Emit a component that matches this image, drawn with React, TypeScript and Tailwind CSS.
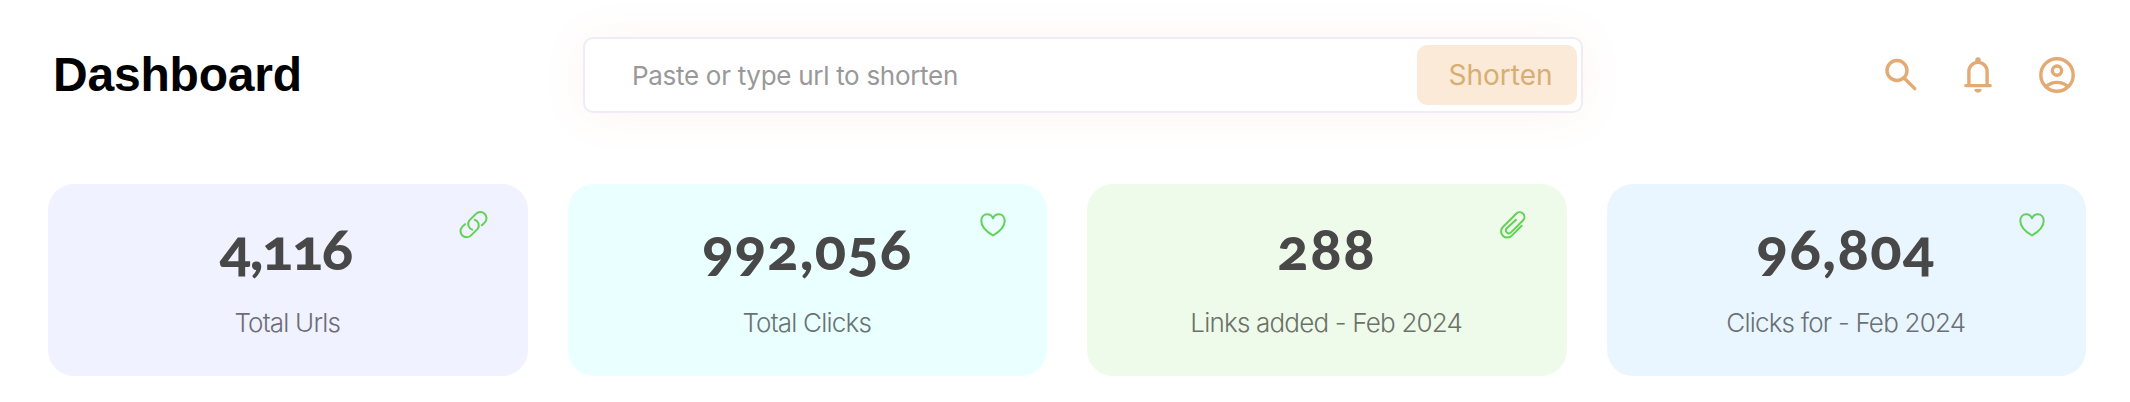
import type { ReactNode } from "react";

const LinkIcon = () => (
  <svg width="30" height="30" viewBox="0 0 30 30" fill="none" stroke="#63d156" strokeWidth="2" strokeLinecap="round">
    <path d="M13.3 19.6A5.9 5.9 0 0 1 10.4 10.4L16.9 3.9A6.1 6.1 0 0 1 25.8 12.4L22.9 15.2" />
    <path d="M15.7 9.7A5.9 5.9 0 0 1 18.6 18.9L12.1 25.4A6.1 6.1 0 0 1 3.2 16.9L6.1 14.1" />
  </svg>
);

const HeartIcon = () => (
  <svg width="30" height="30" viewBox="0 0 30 30" fill="none" stroke="#63d156" strokeWidth="2" strokeLinejoin="round">
    <path d="M15 25.5C11.5 23.4 3.3 17.6 3.3 10.9C3.3 7 5.8 4.2 9.2 4.2C11.8 4.2 14 5.6 15 8.3C16 5.6 18.2 4.2 20.8 4.2C24.2 4.2 26.7 7 26.7 10.9C26.7 17.6 18.5 23.4 15 25.5Z" />
  </svg>
);

const ClipIcon = () => (
  <svg width="30" height="30" viewBox="0 0 30 30" fill="none" stroke="#63d156" strokeWidth="2" strokeLinecap="round" strokeLinejoin="round">
    <path d="M23.6 15.8L13.8 25.6A6 6 0 0 1 4.7 17.2L18.7 3.2A4.8 4.8 0 0 1 25.2 10.2L13 22.4A2.9 2.9 0 0 1 8.8 18.3L18 9.8" />
  </svg>
);

const SearchIcon = () => (
  <svg width="36" height="36" viewBox="0 0 36 36" fill="none" stroke="#e3aa74" strokeWidth="3.4" strokeLinecap="round">
    <circle cx="14" cy="13.5" r="10" />
    <path d="M21.4 21.2L31.8 31.6" />
  </svg>
);

const BellIcon = () => (
  <svg width="36" height="36" viewBox="0 0 36 36" fill="none" stroke="#e3aa74" strokeWidth="3.4" strokeLinecap="round">
    <path d="M5.8 28.6H30.2M8.9 28V14.5A9.1 9.1 0 0 1 27.1 14.5V28" />
    <path d="M15.3 4.9V2.9A2.7 2.7 0 0 1 20.7 2.9V4.9ZM14.4 32.1H21.6A3.6 3.6 0 0 1 14.4 32.1Z" fill="#e3aa74" stroke="none" />
  </svg>
);

const AccountIcon = () => (
  <svg width="36" height="36" viewBox="0 0 36 36" fill="none" stroke="#e3aa74" strokeWidth="3.4">
    <circle cx="18" cy="18" r="16.2" />
    <circle cx="18" cy="13.6" r="4.6" />
    <path d="M7.2 29.4C10.2 26.9 13.9 25.4 18 25.4S25.8 26.9 28.8 29.4" />
  </svg>
);

type Stat = { value: string; label: string; card: string; text: string; track: string; icon: ReactNode };

const stats: Stat[] = [
  { value: "4,116", label: "Total Urls", card: "bg-[#f0f2ff]", text: "text-[#6c6d77]", track: "tracking-[-1.4px] pr-1", icon: <LinkIcon /> },
  { value: "992,056", label: "Total Clicks", card: "bg-[#eaffff]", text: "text-[#697373]", track: "tracking-[1.2px]", icon: <HeartIcon /> },
  { value: "288", label: "Links added - Feb 2024", card: "bg-[#effbea]", text: "text-[#6b7169]", track: "tracking-[1.6px]", icon: <ClipIcon /> },
  { value: "96,804", label: "Clicks for - Feb 2024", card: "bg-[#e9f6ff]", text: "text-[#6a7076]", track: "tracking-[1.5px]", icon: <HeartIcon /> },
];

function StatCard({ value, label, card, text, track, icon }: Stat) {
  return (
    <section className={`relative flex h-48 flex-col items-center rounded-[26px] ${card}`}>
      <div className={`mt-[31px] h-[66px] font-['Lato',sans-serif] text-[58px] leading-[66px] font-black text-[#484848] oldstyle-nums ${track}`}>{value}</div>
      <div className={`mt-[26px] pr-px font-['Inter',sans-serif] text-[26px] leading-8 font-light tracking-[-0.8px] whitespace-nowrap ${text}`}>{label}</div>
      <div className="absolute top-[26px] right-[39px]">{icon}</div>
    </section>
  );
}

export default function App() {
  return (
    <main className="h-[402px] overflow-hidden bg-white pr-11 pl-12">
      <header className="flex items-start">
        <h1 className="mt-[47px] ml-[5px] w-[530px] font-['Liberation_Sans',sans-serif] text-[48px] leading-[56px] font-bold tracking-[-0.2px] text-black">Dashboard</h1>
        <form className="mt-[37px] flex h-[76px] w-[1000px] items-center justify-between rounded-[10px] border-2 border-[#efecf6] bg-white pr-1 pl-[47px] shadow-[0_2px_44px_rgba(240,120,90,0.08)]">
          <input className="w-[700px] font-['Inter',sans-serif] text-[26px] tracking-[-0.3px] text-[#999] outline-none placeholder:text-[#999]" placeholder="Paste or type url to shorten" />
          <button type="button" className="h-[60px] w-40 rounded-[10px] bg-[#faead7] pl-[7px] font-['Inter',sans-serif] text-[28px] font-normal text-[#d8ae74]">Shorten</button>
        </form>
        <nav className="mt-[57px] ml-auto flex gap-[42px] pr-[11px]">
          <SearchIcon />
          <div className="-ml-px pr-px">
            <BellIcon />
          </div>
          <AccountIcon />
        </nav>
      </header>
      <div className="mt-[71px] grid grid-cols-4 gap-10">
        {stats.map((s) => (
          <StatCard key={s.label} {...s} />
        ))}
      </div>
    </main>
  );
}
